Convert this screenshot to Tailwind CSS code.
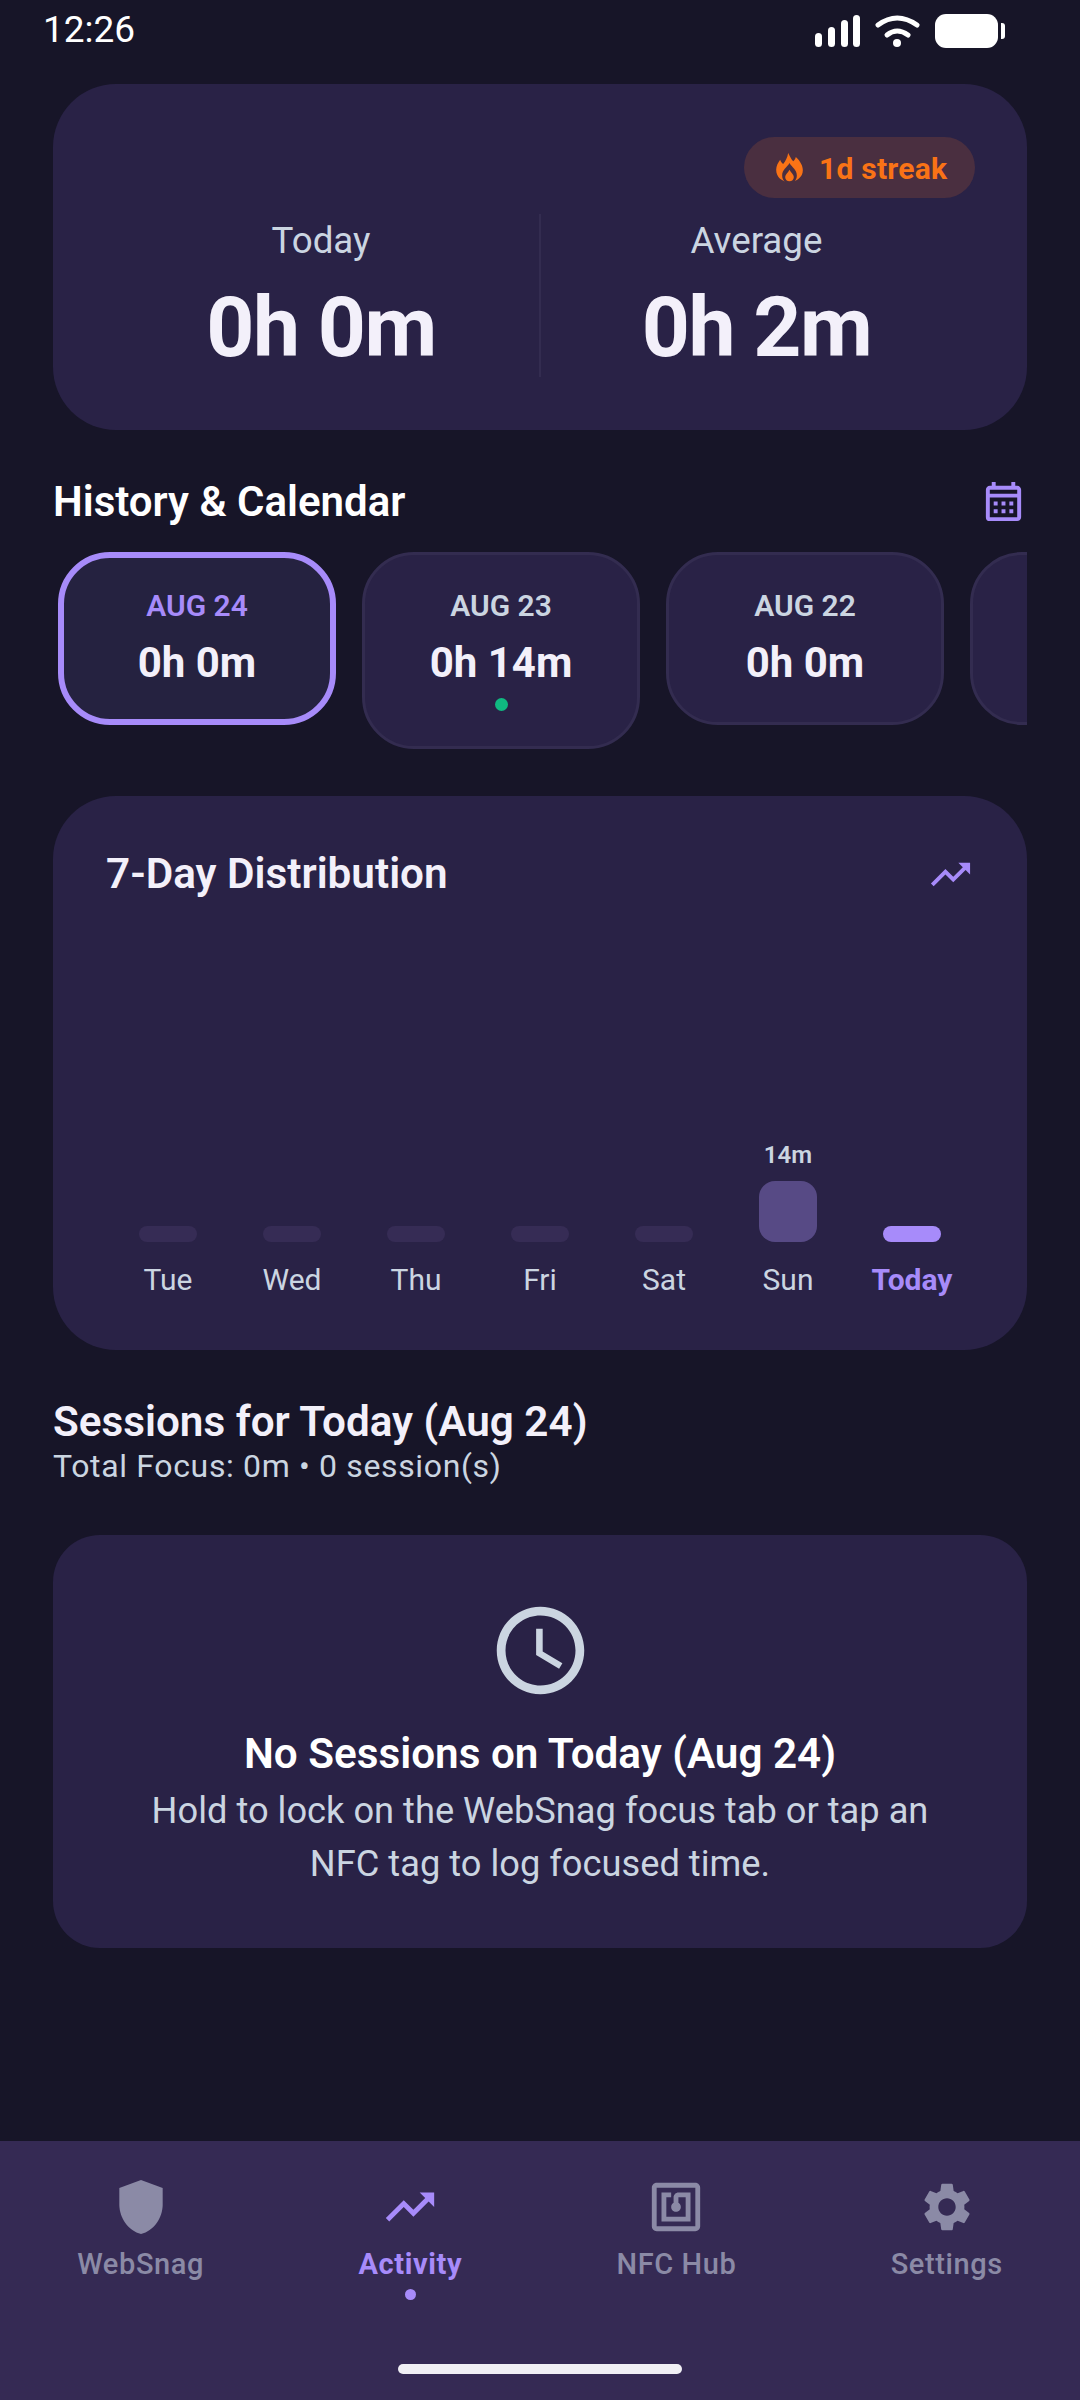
<!DOCTYPE html>
<html>
<head>
<meta charset="utf-8">
<script src="https://cdn.jsdelivr.net/npm/@tailwindcss/browser@4"></script>
</head>
<body class="m-0">
<div class="w-[1080px] h-[2400px] bg-[#171528] flex flex-col overflow-hidden font-['Roboto',sans-serif] text-[#f3f0fa]">
  <div class="h-[84px] shrink-0 flex justify-between items-start pl-[43px] pr-[75px]">
    <span class="text-[37px] leading-[60px] text-white">12:26</span>
    <svg class="w-[190px] h-[40px] mt-[12px]" viewBox="815 12 190 40" fill="#fff">
      <rect x="815" y="33" width="7" height="14" rx="3.5"/>
      <rect x="828" y="27" width="7" height="20" rx="3.5"/>
      <rect x="841" y="20" width="7" height="27" rx="3.5"/>
      <rect x="853" y="15" width="7" height="32" rx="3.5"/>
      <path d="M878 25 Q897 11 917 25" fill="none" stroke="#fff" stroke-width="5" stroke-linecap="round"/>
      <path d="M887 35 Q897 27 908 35" fill="none" stroke="#fff" stroke-width="5" stroke-linecap="round"/>
      <circle cx="897" cy="43" r="4"/>
      <rect x="935" y="14" width="63" height="34" rx="11"/>
      <path d="M1001 23 h1 a3 3 0 0 1 3 3 v10 a3 3 0 0 1 -3 3 h-1 z"/>
    </svg>
  </div>
  <main class="flex-1 flex flex-col px-[53px]">
    <section class="h-[346px] rounded-[63px] bg-[#292246] flex flex-col px-[53px] pt-[53px]">
      <div class="flex justify-end -mr-[1px]">
        <div class="h-[61px] w-[231px] rounded-full bg-[#4a2f40] flex items-center pl-[32px] gap-[16px] text-[#f97316]">
          <svg class="w-[27px] h-[29px] shrink-0" viewBox="0 0 80 87">
            <path fill="#f97316" d="M36 0 C42 10 44 18 51 25 C55 22 57 18 59 12 C72 24 80 38 80 52 C80 72 62 87 40 87 C18 87 0 72 0 50 C0 38 6 28 12 20 C14 26 17 30 21 33 C28 24 34 14 36 0 Z"/>
            <path fill="#4a2f40" d="M40 30 C48 44 62 50 62 68 C62 76 58 82 54 87 L26 87 C22 82 18 76 18 68 C18 50 32 44 40 30 Z"/>
            <path fill="#f97316" d="M40 50 C44 58 53 64 53 72 C53 80 47 85 40 85 C33 85 27 80 27 72 C27 64 36 58 40 50 Z"/>
          </svg>
          <span class="text-[30px] leading-[40px] mt-[2px] font-bold tracking-[0.25px]">1d streak</span>
        </div>
      </div>
      <div class="grid grid-cols-[1fr_2px_1fr] mt-[16px] h-[163px] -mx-[3px]">
        <div class="flex flex-col items-center">
          <span class="text-[36.75px] leading-[48px] mt-[3px] text-[#cbd5e1]">Today</span>
          <span class="text-[84px] leading-[98px] font-bold tracking-[-1.5px] mt-[14px]">0h 0m</span>
        </div>
        <div class="bg-[#332c50]"></div>
        <div class="flex flex-col items-center pr-[5px]">
          <span class="text-[36.75px] leading-[48px] mt-[3px] text-[#cbd5e1]">Average</span>
          <span class="text-[84px] leading-[98px] font-bold tracking-[-1.5px] mt-[14px]">0h 2m</span>
        </div>
      </div>
    </section>

    <div class="flex justify-between items-center mt-[46px] h-[50px]">
      <h2 class="text-[42px] leading-[52px] pt-[1px] font-semibold text-white">History &amp; Calendar</h2>
      <svg class="w-[47px] h-[47px]" viewBox="0 0 24 24" fill="#a78bfa"><path d="M19 4h-1V2h-2v2H8V2H6v2H5c-1.11 0-1.99.9-1.99 2L3 20a2 2 0 0 0 2 2h14c1.1 0 2-.9 2-2V6c0-1.1-.9-2-2-2zm0 16H5V10h14v10zm0-12H5V6h14v2zM9 14H7v-2h2v2zm4 0h-2v-2h2v2zm4 0h-2v-2h2v2zm-8 4H7v-2h2v2zm4 0h-2v-2h2v2zm4 0h-2v-2h2v2z"/></svg>
    </div>

    <div class="flex items-start gap-[26px] mt-[26px] pl-[5px] overflow-hidden h-[197px]">
      <div class="shrink-0 w-[278px] h-[173px] rounded-[52px] border-[6px] border-[#a78bfa] bg-[#252240] flex flex-col items-center pt-[28px]">
        <span class="text-[30px] leading-[40px] font-semibold text-[#a78bfa]">AUG 24</span>
        <span class="text-[42px] leading-[50px] font-bold mt-[12px]">0h 0m</span>
      </div>
      <div class="shrink-0 w-[278px] h-[197px] rounded-[52px] border-[3px] border-[#332c50] bg-[#292246] flex flex-col items-center pt-[31px]">
        <span class="text-[30px] leading-[40px] font-semibold text-[#cbd5e1]">AUG 23</span>
        <span class="text-[42px] leading-[50px] font-bold mt-[12px]">0h 14m</span>
        <span class="w-[13px] h-[13px] rounded-full bg-[#10b981] mt-[10px]"></span>
      </div>
      <div class="shrink-0 w-[278px] h-[173px] rounded-[52px] border-[3px] border-[#332c50] bg-[#292246] flex flex-col items-center pt-[31px]">
        <span class="text-[30px] leading-[40px] font-semibold text-[#cbd5e1]">AUG 22</span>
        <span class="text-[42px] leading-[50px] font-bold mt-[12px]">0h 0m</span>
      </div>
      <div class="shrink-0 w-[278px] h-[173px] rounded-[52px] border-[3px] border-[#332c50] bg-[#292246]"></div>
    </div>

    <section class="mt-[47px] h-[554px] rounded-[63px] bg-[#292246] flex flex-col px-[53px] pt-[53px]">
      <div class="flex justify-between items-center h-[50px]">
        <h2 class="text-[42.25px] font-semibold">7-Day Distribution</h2>
        <svg class="w-[47px] h-[47px]" viewBox="0 0 24 24" fill="#a78bfa"><path d="M16 6l2.29 2.29-4.88 4.88-4-4L2 16.59 3.41 18l6-6 4 4 6.3-6.29L22 12V6z"/></svg>
      </div>
      <div class="grid grid-cols-7 h-[403px] items-end text-[30px] leading-[44px] text-[#cbd5e1] text-center">
        <div class="flex flex-col items-center"><div class="w-[58px] h-[16px] rounded-[8px] bg-[#362c55]"></div><span class="mt-[16px]">Tue</span></div>
        <div class="flex flex-col items-center"><div class="w-[58px] h-[16px] rounded-[8px] bg-[#362c55]"></div><span class="mt-[16px]">Wed</span></div>
        <div class="flex flex-col items-center"><div class="w-[58px] h-[16px] rounded-[8px] bg-[#362c55]"></div><span class="mt-[16px]">Thu</span></div>
        <div class="flex flex-col items-center"><div class="w-[58px] h-[16px] rounded-[8px] bg-[#362c55]"></div><span class="mt-[16px]">Fri</span></div>
        <div class="flex flex-col items-center"><div class="w-[58px] h-[16px] rounded-[8px] bg-[#362c55]"></div><span class="mt-[16px]">Sat</span></div>
        <div class="flex flex-col items-center"><span class="text-[24px] leading-[30px] font-semibold mb-[11px]">14m</span><div class="w-[58px] h-[61px] rounded-[16px] bg-[#574a85]"></div><span class="mt-[16px]">Sun</span></div>
        <div class="flex flex-col items-center"><div class="w-[58px] h-[16px] rounded-[8px] bg-[#a78bfa]"></div><span class="mt-[16px] font-bold text-[#a78bfa]">Today</span></div>
      </div>
    </section>

    <h2 class="mt-[47px] text-[42.25px] leading-[50px] font-semibold">Sessions for Today (Aug 24)</h2>
    <p class="mt-[-3px] text-[32px] leading-[44px] text-[#cbd5e1] tracking-[0.65px]">Total Focus: 0m • 0 session(s)</p>

    <section class="mt-[47px] h-[413px] rounded-[47px] bg-[#292246] flex flex-col items-center pt-[63px] text-center">
      <svg class="w-[105px] h-[105px]" viewBox="0 0 24 24" fill="#cbd5e1"><path d="M11.99 2C6.47 2 2 6.48 2 12s4.47 10 9.99 10C17.52 22 22 17.52 22 12S17.52 2 11.99 2zM12 20c-4.42 0-8-3.58-8-8s3.58-8 8-8 8 3.58 8 8-3.58 8-8 8zm.5-13H11v6l5.25 3.15.75-1.23-4.5-2.67z"/></svg>
      <h3 class="mt-[26px] text-[42.25px] leading-[50px] font-semibold text-white">No Sessions on Today (Aug 24)</h3>
      <p class="mt-[5px] text-[36.25px] leading-[53px] text-[#cbd5e1]">Hold to lock on the WebSnag focus tab or tap an<br>NFC tag to log focused time.</p>
    </section>
  </main>
  <nav class="h-[259px] shrink-0 bg-[#352a54] relative flex justify-around items-start pt-[37px]">
    <div class="flex flex-col items-center text-[#8b8aa6]">
      <svg class="w-[58px] h-[58px]" viewBox="1.3 1.3 21.4 21.4" fill="#8b8aa6"><path d="M12 2 4 5v6.09c0 5.05 3.41 9.76 8 10.91 4.59-1.15 8-5.86 8-10.91V5l-8-3z"/></svg>
      <span class="text-[29px] leading-[40px] font-medium tracking-[0.6px] mt-[8px]">WebSnag</span>
    </div>
    <div class="flex flex-col items-center text-[#a78bfa]">
      <svg class="w-[58px] h-[58px]" viewBox="0 0 24 24" fill="#a78bfa"><path d="M16 6l2.29 2.29-4.88 4.88-4-4L2 16.59 3.41 18l6-6 4 4 6.3-6.29L22 12V6z"/></svg>
      <span class="text-[29px] leading-[40px] font-bold tracking-[0.6px] mt-[8px]">Activity</span>
      <span class="w-[11px] h-[11px] rounded-full bg-[#a78bfa] mt-[5px]"></span>
    </div>
    <div class="flex flex-col items-center text-[#8b8aa6]">
      <svg class="w-[58px] h-[58px]" viewBox="0 0 24 24" fill="#8b8aa6"><path d="M20 2H4c-1.1 0-2 .9-2 2v16c0 1.1.9 2 2 2h16c1.1 0 2-.9 2-2V4c0-1.1-.9-2-2-2zm0 18H4V4h16v16zM18 6h-5c-1.1 0-2 .9-2 2v2.28c-.6.35-1 .98-1 1.72 0 1.1.9 2 2 2s2-.9 2-2c0-.74-.4-1.38-1-1.72V8h3v8H8V8h2V6H6v12h12V6z"/></svg>
      <span class="text-[29px] leading-[40px] font-medium tracking-[0.6px] mt-[8px]">NFC Hub</span>
    </div>
    <div class="flex flex-col items-center text-[#8b8aa6]">
      <svg class="w-[58px] h-[58px]" viewBox="0 0 24 24" fill="#8b8aa6"><path d="M19.14 12.94c.04-.3.06-.61.06-.94 0-.32-.02-.64-.07-.94l2.03-1.58c.18-.14.23-.41.12-.61l-1.92-3.32c-.12-.22-.37-.29-.59-.22l-2.39.96c-.5-.38-1.03-.7-1.62-.94l-.36-2.54c-.04-.24-.24-.41-.48-.41h-3.84c-.24 0-.43.17-.47.41l-.36 2.54c-.59.24-1.13.57-1.62.94l-2.39-.96c-.22-.08-.47 0-.59.22L2.74 8.87c-.12.21-.08.47.12.61l2.03 1.58c-.05.3-.09.63-.09.94s.02.64.07.94l-2.03 1.58c-.18.14-.23.41-.12.61l1.92 3.32c.12.22.37.29.59.22l2.39-.96c.5.38 1.03.7 1.62.94l.36 2.54c.05.24.24.41.48.41h3.84c.24 0 .44-.17.47-.41l.36-2.54c.59-.24 1.13-.56 1.62-.94l2.39.96c.22.08.47 0 .59-.22l1.92-3.32c.12-.22.07-.47-.12-.61l-2.01-1.58zM12 15.6c-1.98 0-3.6-1.62-3.6-3.6s1.62-3.6 3.6-3.6 3.6 1.62 3.6 3.6-1.62 3.6-3.6 3.6z"/></svg>
      <span class="text-[29px] leading-[40px] font-medium tracking-[0.6px] mt-[8px]">Settings</span>
    </div>
    <div class="absolute left-[398px] bottom-[26px] w-[284px] h-[10px] rounded-full bg-[#f0eff4]"></div>
  </nav>
</div>
</body>
</html>
